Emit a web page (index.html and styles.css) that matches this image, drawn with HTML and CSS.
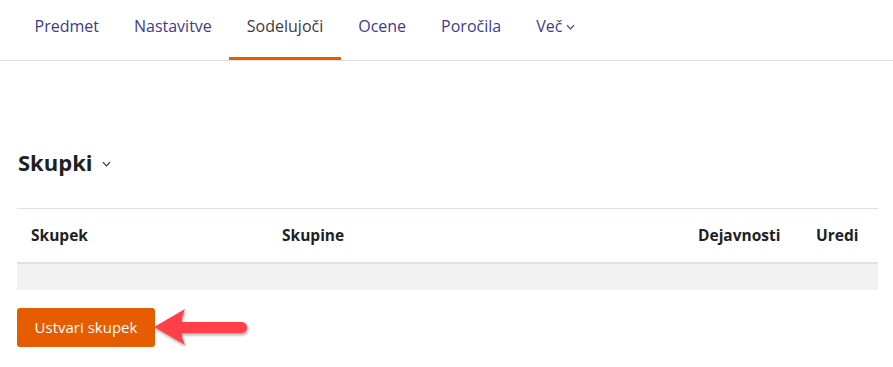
FILE: index.html
```html
<!DOCTYPE html>
<html lang="sl">
<head>
<meta charset="utf-8">
<title>Skupki</title>
<link rel="stylesheet" href="styles.css">
</head>
<body>
<nav class="tabs">
  <a class="tab" href="#">Predmet</a>
  <a class="tab" href="#">Nastavitve</a>
  <a class="tab active" href="#">Sodelujoči</a>
  <a class="tab" href="#">Ocene</a>
  <a class="tab" href="#">Poročila</a>
  <a class="tab" href="#">Več <svg class="chev" viewBox="0 0 10 6" width="9" height="6"><path d="M1 1l4 4 4-4" fill="none" stroke="currentColor" stroke-width="1.3"/></svg></a>
</nav>
<main class="content">
  <h2 class="title">Skupki <svg class="chev-h" viewBox="0 0 10 6" width="9" height="6"><path d="M1 1l4 4 4-4" fill="none" stroke="currentColor" stroke-width="1.3"/></svg></h2>
  <table class="grid">
    <colgroup>
      <col class="c1"><col class="c2"><col class="c3"><col class="c4">
    </colgroup>
    <thead>
      <tr><th>Skupek</th><th>Skupine</th><th>Dejavnosti</th><th>Uredi</th></tr>
    </thead>
    <tbody>
      <tr class="empty"><td colspan="4"></td></tr>
    </tbody>
  </table>
  <div class="actions">
    <button class="btn">Ustvari skupek</button>
    <svg class="arrow" viewBox="0 0 110 50" width="110" height="50">
      <defs>
        <filter id="sh" x="-20%" y="-30%" width="140%" height="170%">
          <feDropShadow dx="1" dy="2" stdDeviation="1.6" flood-color="#000" flood-opacity="0.35"/>
        </filter>
      </defs>
      <g filter="url(#sh)" fill="#ff4149">
        <path d="M3 22 L34 4 Q30 14 31 17 L90 17 Q96 17 96 22.5 Q96 28 90 28 L31 28 Q30 31 34 40 Z"/>
      </g>
    </svg>
  </div>
</main>
</body>
</html>
```
FILE: styles.css
```css
* { box-sizing: border-box; }
body {
  margin: 0;
  background: #fff;
  font-family: "Open Sans", "Noto Sans", sans-serif;
  color: #1d2125;
}
.tabs {
  display: flex;
  height: 61px;
  padding-left: 17px;
  border-bottom: 1px solid #dee2e6;
}
.tab {
  display: flex;
  align-items: center;
  gap: 4px;
  padding: 0 17.5px 5px;
  font-size: 16px;
  color: #3f3a8c;
  text-decoration: none;
  border-bottom: 3px solid transparent;
}
.tab.active {
  color: #3b3b3b;
  border-bottom-color: #e65c00;
}
.chev { margin-top: 2px; }
.content {
  padding: 88px 15px 0 17px;
  position: relative;
}
.title {
  margin: 0 0 33px 1px;
  font-size: 22px;
  font-weight: 700;
  line-height: 26px;
  display: flex;
  align-items: center;
  gap: 9px;
  color: #1d2125;
}
.chev-h { margin-top: 4px; color: #333; }
.grid {
  width: 861px;
  border-collapse: collapse;
  table-layout: fixed;
  border-top: 1px solid #dee2e6;
}
.c1 { width: 251px; }
.c2 { width: 416px; }
.c3 { width: 118px; }
.c4 { width: 76px; }
.grid th {
  text-align: left;
  font-size: 15.5px;
  font-weight: 700;
  height: 54px;
  padding: 0 14px 1px;
  border-bottom: 2px solid #dee2e6;
  color: #1d2125;
}
.grid .empty td {
  height: 27px;
  background: #f2f2f2;
  padding: 0;
}
.actions {
  margin-top: 18px;
  display: flex;
  align-items: center;
  position: relative;
}
.btn {
  width: 138px;
  height: 39px;
  background: #e65c00;
  color: #fff;
  border: none;
  border-radius: 3px;
  font-family: inherit;
  font-size: 15px;
  padding: 0;
}
.arrow {
  position: absolute;
  left: 134px;
  top: -3px;
}
```
